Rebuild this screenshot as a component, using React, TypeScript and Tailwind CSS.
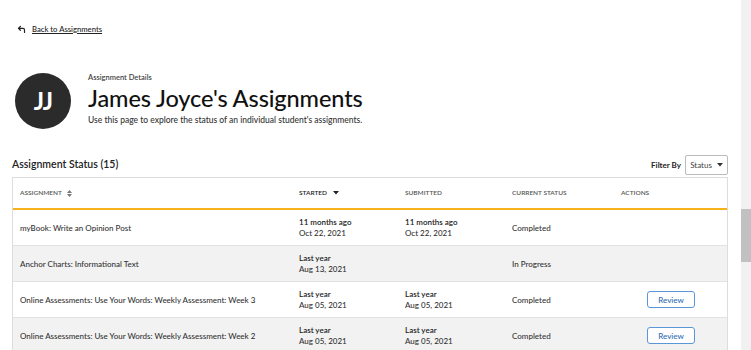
import React from 'react';

type Row = {
  title: string;
  started?: [string, string];
  submitted?: [string, string];
  status: string;
  review?: boolean;
};

const rows: Row[] = [
  {
    title: 'myBook: Write an Opinion Post',
    started: ['11 months ago', 'Oct 22, 2021'],
    submitted: ['11 months ago', 'Oct 22, 2021'],
    status: 'Completed',
  },
  {
    title: 'Anchor Charts: Informational Text',
    started: ['Last year', 'Aug 13, 2021'],
    status: 'In Progress',
  },
  {
    title: 'Online Assessments: Use Your Words: Weekly Assessment: Week 3',
    started: ['Last year', 'Aug 05, 2021'],
    submitted: ['Last year', 'Aug 05, 2021'],
    status: 'Completed',
    review: true,
  },
  {
    title: 'Online Assessments: Use Your Words: Weekly Assessment: Week 2',
    started: ['Last year', 'Aug 05, 2021'],
    submitted: ['Last year', 'Aug 05, 2021'],
    status: 'Completed',
    review: true,
  },
];

// Две строки: относительная дата и точная
const DateCell: React.FC<{ value?: [string, string] }> = ({ value }) => {
  if (!value) return <div />;
  return (
    <div className="flex flex-col leading-[11px]">
      <span className="font-semibold text-[#222]">{value[0]}</span>
      <span className="text-[#333]">{value[1]}</span>
    </div>
  );
};

export default function App() {
  return (
    <div className="flex h-[350px] w-[751px] overflow-hidden bg-white font-['Lato',sans-serif] text-[#222]">
      <div className="flex-1 pl-3 pr-[13px]">
        {/* Ссылка назад */}
        <div className="ml-[5px] flex h-[60px] items-center gap-[6px] pb-[1px]">
          <svg width="9" height="9" viewBox="0 0 24 24" fill="none" stroke="#222" strokeWidth="3.2" strokeLinecap="round" strokeLinejoin="round">
            <polyline points="9 14 4 9 9 4" />
            <path d="M20 20v-7a4 4 0 0 0-4-4H4" />
          </svg>
          <span className="text-[7.7px] font-medium text-[#222] underline underline-offset-1">Back to Assignments</span>
        </div>

        {/* Заголовок страницы */}
        <div className="mt-[13px] flex items-start gap-[17px] pl-[3px]">
          <div className="flex h-[56px] w-[56px] items-center justify-center rounded-full bg-[#2b2b2b]">
            <span className="text-[24px] font-bold tracking-[-1px] text-white">JJ</span>
          </div>
          <div className="flex flex-col">
            <span className="text-[7.5px] font-semibold leading-[10px] text-[#444]">Assignment Details</span>
            <h1 className="mt-[1px] text-[23.5px] font-medium leading-[28px] tracking-[-0.1px] text-[#111]">
              James Joyce's Assignments
            </h1>
            <p className="mt-[3px] text-[8.5px] font-medium leading-[10px] text-[#333]">
              Use this page to explore the status of an individual student's assignments.
            </p>
          </div>
        </div>

        {/* Статус и фильтр */}
        <div className="mt-[25px] flex h-[21px] items-center justify-between">
          <span className="text-[10.5px] font-semibold text-[#222]">Assignment Status (15)</span>
          <div className="flex items-center gap-[4px]">
            <span className="text-[8px] font-bold text-[#222]">Filter By</span>
            <div className="flex h-[20px] w-[43px] items-center justify-center gap-[5px] rounded-[2px] border border-[#bbb] text-[8px] text-[#444]">
              Status
              <svg width="6" height="4" viewBox="0 0 6 4"><path d="M0 0h6L3 3.5z" fill="#333" /></svg>
            </div>
          </div>
        </div>

        {/* Таблица */}
        <div className="mt-[2px] border-x border-t border-[#ddd] text-[8px]">
          <div className="grid h-[32px] grid-cols-[279px_106px_107px_109px_1fr] items-center border-b-2 border-[#f5b21b] pl-[7px] text-[6.5px] font-semibold uppercase text-[#555]">
            <div className="flex items-center gap-[5px]">
              Assignment
              <svg width="5" height="7" viewBox="0 0 5 7"><path d="M0 3L2.5 0L5 3z M0 4L2.5 7L5 4z" fill="#777" /></svg>
            </div>
            <div className="flex items-center gap-[6px] text-[#222]">
              Started
              <svg width="6" height="4" viewBox="0 0 6 4"><path d="M0 0h6L3 3.5z" fill="#222" /></svg>
            </div>
            <div>Submitted</div>
            <div>Current Status</div>
            <div>Actions</div>
          </div>
          {rows.map((r, i) => (
            <div
              key={i}
              className={`grid h-[36px] grid-cols-[279px_106px_107px_109px_1fr] items-center border-b border-[#e2e2e2] pl-[7px] font-medium ${
                i % 2 === 1 ? 'bg-[#f2f2f2]' : 'bg-white'
              }`}
            >
              <div className="text-[#333]">{r.title}</div>
              <DateCell value={r.started} />
              <DateCell value={r.submitted} />
              <div className="text-[#333]">{r.status}</div>
              <div>
                {r.review && (
                  <div className="ml-[26px] flex h-[17px] w-[48px] items-center justify-center rounded-[3px] border border-[#5b97d8] bg-white text-[8px] text-[#2e6cb5]">
                    Review
                  </div>
                )}
              </div>
            </div>
          ))}
        </div>
      </div>

      {/* Полоса прокрутки */}
      <div className="w-[10px] bg-[#f1f1f1] pt-[209px]">
        <div className="h-[53px] bg-[#c1c1c1]" />
      </div>
    </div>
  );
}
